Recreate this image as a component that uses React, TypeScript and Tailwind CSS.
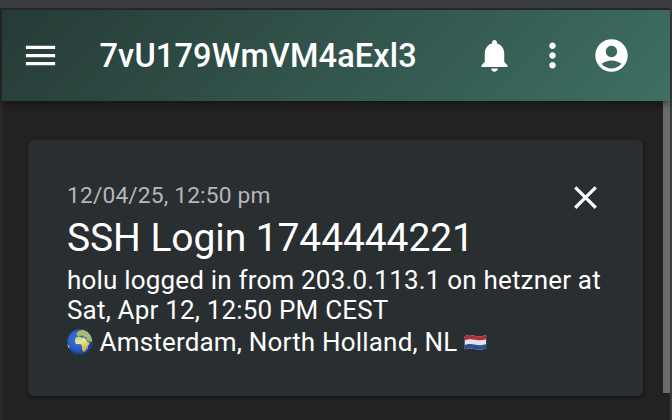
import React from "react";

function Icon({ d, className = "" }: { d: string; className?: string }) {
  return (
    <svg viewBox="0 0 24 24" fill="currentColor" className={`size-[39px] shrink-0 ${className}`}>
      <path d={d} />
    </svg>
  );
}

const MENU = "M3 18h18v-2H3v2zm0-5h18v-2H3v2zm0-7v2h18V6H3z";
const BELL =
  "M12 22c1.1 0 2-.9 2-2h-4c0 1.1.89 2 2 2zm6-6v-5c0-3.07-1.64-5.64-4.5-6.32V4c0-.83-.67-1.5-1.5-1.5s-1.5.67-1.5 1.5v.68C7.63 5.36 6 7.92 6 11v5l-2 2v1h16v-1l-2-2z";
const MORE =
  "M12 8c1.1 0 2-.9 2-2s-.9-2-2-2-2 .9-2 2 .9 2 2 2zm0 2c-1.1 0-2 .9-2 2s.9 2 2 2 2-.9 2-2-.9-2-2-2zm0 6c-1.1 0-2 .9-2 2s.9 2 2 2 2-.9 2-2-.9-2-2-2z";
const ACCOUNT =
  "M12 2C6.48 2 2 6.48 2 12s4.48 10 10 10 10-4.48 10-10S17.52 2 12 2zm0 4c1.93 0 3.5 1.57 3.5 3.5S13.93 13 12 13s-3.5-1.57-3.5-3.5S10.07 6 12 6zm0 14c-2.03 0-4.43-.82-6.14-2.88C7.55 15.8 9.68 15 12 15s4.45.8 6.14 2.12C16.43 19.18 14.03 20 12 20z";
const CLOSE =
  "M19 6.41L17.59 5 12 10.59 6.41 5 5 6.41 10.59 12 5 17.59 6.41 19 12 13.41 17.59 19 19 17.59 13.41 12z";

function Globe() {
  return (
    <svg viewBox="0 0 26 26" className="size-[26px] shrink-0">
      <defs>
        <radialGradient id="sea" cx="0.42" cy="0.4" r="0.62">
          <stop offset="0" stopColor="#3c78dc" />
          <stop offset="0.65" stopColor="#2759cb" />
          <stop offset="1" stopColor="#1c3878" />
        </radialGradient>
        <linearGradient id="land" x1="0" y1="0" x2="0.4" y2="1">
          <stop offset="0" stopColor="#c3cf78" />
          <stop offset="0.45" stopColor="#eaea8a" />
          <stop offset="1" stopColor="#c9ae4c" />
        </linearGradient>
        <clipPath id="disc">
          <circle cx="13" cy="13" r="12.7" />
        </clipPath>
      </defs>
      <circle cx="13" cy="13" r="12.7" fill="url(#sea)" />
      <g clipPath="url(#disc)">
        <path
          fill="#a9bb6c"
          d="M9.500 6l.5-2.500 2.500-1.800 4-.9 4.500 2.400 3 4 1.300 4.500-1.500 1.500-1.500-1.700-1.200 1.500-1.600-3-.2-1.700-2.300-.2-1-1.300-1.300-.5-1.300 1-2-.4z"
        />
        <path
          fill="url(#land)"
          d="M9 8.300l3.500-.8 1.400 1 4 .3 1.700 2.600 1.200 1.900 2 .1-.8 2.200-2.200 2.300-.2 2.200-1.600 2.400-1.900.2-1-2.500-.1-2.800-.8-1.800-1.500-.5-3.200.1-1.500-2 .1-2.700z"
        />
        <path fill="#d7c465" d="M20.400 17.200l.6.600-.7 2.400-.8-.5z" />
        <path fill="#d7c465" d="M0 15l2 1.600.5 1.900-.7 1.500L0 19.500z" />
      </g>
    </svg>
  );
}

function DutchFlag() {
  return (
    <svg viewBox="0 0 24 18" className="h-[17px] w-[23px] shrink-0">
      <defs>
        <clipPath id="wave">
          <path d="M.5 2.400C5 .3 8 1.200 12 2s7 .4 11.300-1v14c-4 1.800-7.300 1.900-11.300 1.100S5 14.700.5 16.500z" />
        </clipPath>
      </defs>
      <g clipPath="url(#wave)">
        <rect width="24" height="18" fill="#e2e3e8" />
        <path d="M0 0h24v5.200c-4 1.600-7.600 1.800-12 .9S4 5.300 0 7z" fill="#ab323a" />
        <path d="M0 12c4-1.700 7.600-1.500 12-.6s8 .5 12-1.100V18H0z" fill="#2f4f94" />
      </g>
    </svg>
  );
}

function AppBar() {
  return (
    <header className="relative z-10 flex h-[91px] w-[667.5px] items-center bg-[linear-gradient(135deg,#263a36_0%,#3e6f62_100%)] pl-[19px] text-white shadow-[0_3px_7px_rgba(0,0,0,0.4)]">
      <Icon d={MENU} />
      <h1 className="ml-[39.5px] w-[318.5px] text-[32.5px] leading-[52px] font-medium tracking-[0.0045em] whitespace-nowrap">
        7vU179WmVM4aExl3
      </h1>
      <Icon d={BELL} className="ml-[57px]" />
      <Icon d={MORE} className="ml-[19px]" />
      <Icon d={ACCOUNT} className="ml-[19.500px]" />
    </header>
  );
}

function MessageCard() {
  return (
    <article className="h-[256px] w-[615px] rounded-[6px] bg-[#292e30] pt-[38px] pl-[39px] text-white shadow-[0_2px_4px_rgba(0,0,0,0.4)]">
      <div className="flex h-[37px] justify-between pr-[38px]">
        <time className="pt-px text-[22.75px] leading-[34px] tracking-[0.007em] whitespace-nowrap text-[#b5b7b8]">
          12/04/25, 12:50 pm
        </time>
        <Icon d={CLOSE} />
      </div>
      <h2 className="text-[39px] leading-[46px] tracking-[-0.0025em] whitespace-nowrap">SSH Login 1744444221</h2>
      <div className="pt-[4px] text-[26px] tracking-[0.0072em] whitespace-nowrap">
        <p className="leading-[31px]">holu logged in from 203.0.113.1 on hetzner at</p>
        <p className="leading-[29px]">Sat, Apr 12, 12:50 PM CEST</p>
        <p className="flex items-center leading-[34px]">
          <Globe />
          <span className="mr-[7px] ml-[6.500px]">Amsterdam, North Holland, NL</span>
          <DutchFlag />
        </p>
      </div>
    </article>
  );
}

export default function App() {
  return (
    <div className="flex h-[420px] w-[672px] flex-col overflow-hidden bg-[#3b3b42] pt-[8px] font-[Roboto,sans-serif]">
      <div className="flex h-[412px] w-[669.5px] flex-col border-t-2 border-l-2 border-[#29292b] bg-[#222222]">
        <AppBar />
        <main className="flex h-[319px] justify-between pl-[26px]">
          <div className="pt-[39px]">
            <MessageCard />
          </div>
          <div className="h-[292px] w-[6.500px] bg-[#6b6b6b]" />
        </main>
      </div>
    </div>
  );
}
